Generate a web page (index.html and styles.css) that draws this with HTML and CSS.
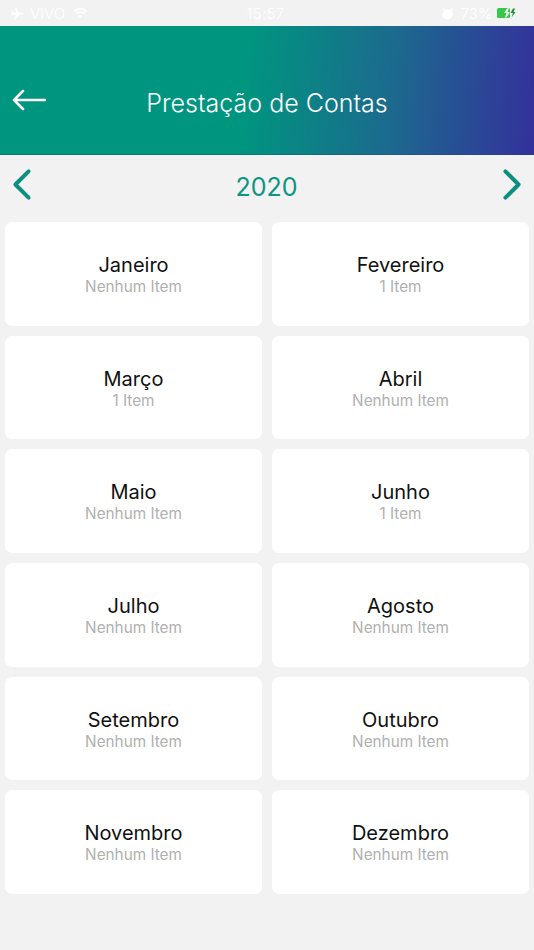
FILE: index.html
```html
<!DOCTYPE html>
<html lang="pt">
<head>
<meta charset="utf-8">
<title>Prestação de Contas</title>
<link rel="stylesheet" href="styles.css">
</head>
<body>
<div class="status">
  <div class="status-left">
    <svg class="st-plane" viewBox="0 0 16 14"><path d="M15 7c0-.7-.6-1-1.300-1H10L6.500 1H5l1.800 5H3.300L2 4.500H1L1.800 7 1 9.500h1L3.300 8h3.500L5 13h1.500L10 8h3.700C14.400 8 15 7.700 15 7z"/></svg>
    <span>VIVO</span>
    <svg class="st-wifi" viewBox="0 0 16 12"><path d="M8 11 5.800 8.600a3.200 3.200 0 0 1 4.400 0zM4.300 7 2.800 5.400a7.600 7.600 0 0 1 10.400 0L11.700 7a5.400 5.400 0 0 0-7.400 0zM1.700 4.300.5 3a11 11 0 0 1 15 0l-1.200 1.300a9.200 9.200 0 0 0-12.600 0z"/></svg>
  </div>
  <span class="status-time">15:57</span>
  <div class="status-right">
    <svg class="st-alarm" viewBox="0 0 14 14"><circle cx="7" cy="8" r="5.500"/><path d="M1 3l2.500-2 1 1L2 4zM13 3l-2.500-2-1 1L12 4z"/></svg>
    <span>73%</span>
    <svg class="st-batt" viewBox="0 0 22 12"><rect x="0" y="1" width="13" height="10" rx="1.500" fill="#35c84a"/><path d="M10 1.500 7 6h2.500L8 10.500 9 11l4-6h-2.500L12 1z" fill="#f2f2f2"/><path d="M16 1.500 13.500 6H16l-1.500 4.500L18.500 5H16.500L18 1.500z" fill="#1f8a3a"/></svg>
  </div>
</div>
<header class="topbar">
  <svg class="back" viewBox="0 0 34 22"><path d="M33 11H2M11 2 2 11l9 9"/></svg>
  <h1>Prestação de Contas</h1>
</header>
<nav class="year">
  <svg class="chev" viewBox="0 0 18 30"><path d="M15 3 3 15l12 12"/></svg>
  <span class="year-label">2020</span>
  <svg class="chev" viewBox="0 0 18 30"><path d="M3 3l12 12L3 27"/></svg>
</nav>
<main class="months">
  <div class="card"><div class="m">Janeiro</div><div class="n">Nenhum Item</div></div>
  <div class="card"><div class="m">Fevereiro</div><div class="n">1 Item</div></div>
  <div class="card"><div class="m">Março</div><div class="n">1 Item</div></div>
  <div class="card"><div class="m">Abril</div><div class="n">Nenhum Item</div></div>
  <div class="card"><div class="m">Maio</div><div class="n">Nenhum Item</div></div>
  <div class="card"><div class="m">Junho</div><div class="n">1 Item</div></div>
  <div class="card"><div class="m">Julho</div><div class="n">Nenhum Item</div></div>
  <div class="card"><div class="m">Agosto</div><div class="n">Nenhum Item</div></div>
  <div class="card"><div class="m">Setembro</div><div class="n">Nenhum Item</div></div>
  <div class="card"><div class="m">Outubro</div><div class="n">Nenhum Item</div></div>
  <div class="card"><div class="m">Novembro</div><div class="n">Nenhum Item</div></div>
  <div class="card"><div class="m">Dezembro</div><div class="n">Nenhum Item</div></div>
</main>
</body>
</html>
```

FILE: styles.css
```css
* { box-sizing: border-box; }
html, body { margin: 0; padding: 0; }
body {
  width: 534px;
  height: 950px;
  overflow: hidden;
  background: #f2f2f3;
  font-family: Inter, "Open Sans", sans-serif;
}
.status {
  height: 26px;
  padding: 0 15px 0 10px;
  display: grid;
  grid-template-columns: 1fr auto 1fr;
  align-items: center;
  color: #fff;
  font-size: 15px;
  font-weight: 300;
}
.status-left, .status-right { display: flex; align-items: center; gap: 5px; }
.status-right { justify-content: flex-end; gap: 7px; }
.status svg { fill: #fff; display: block; }
.st-plane { width: 15px; height: 13px; }
.st-wifi { width: 15px; height: 11px; margin-left: 3px; }
.st-alarm { width: 13px; height: 13px; }
.st-batt { width: 22px; height: 12px; margin-left: -2px; }
.status-time { font-size: 15px; letter-spacing: .3px; margin-left: 2px; }
.topbar {
  height: 129px;
  background: linear-gradient(94deg, #00957f 0%, #00957f 46%, #1c6a8e 73%, #34319b 100%);
  display: flex;
  align-items: center;
  justify-content: center;
  position: relative;
  padding-top: 25px;
  border-bottom: 1px solid rgba(30,70,110,.4);
}
.topbar h1 {
  margin: 0;
  color: #fff;
  font-size: 25px;
  font-weight: 300;
  letter-spacing: 0;
}
.back {
  position: absolute;
  left: 12px;
  top: 63px;
  width: 34px;
  height: 22px;
  fill: none;
  stroke: #fff;
  stroke-width: 2.600;
  stroke-linecap: round;
  stroke-linejoin: round;
}
.year {
  height: 67px;
  padding: 0 12px 8px;
  display: flex;
  align-items: center;
  justify-content: space-between;
}
.year-label {
  color: #0b9583;
  font-size: 25px;
  font-weight: 400;
  line-height: 34px;
  padding: 5px 1px 0 0;
}
.chev {
  width: 20px;
  height: 33px;
  fill: none;
  stroke: #0b8f7e;
  stroke-width: 3.600;
  stroke-linecap: round;
  stroke-linejoin: round;
}
.months {
  padding: 0 5px;
  display: grid;
  grid-template-columns: 1fr 1fr;
  grid-auto-rows: 103.700px;
  gap: 10px;
}
.card {
  background: #fff;
  border-radius: 7px;
  display: flex;
  flex-direction: column;
  align-items: center;
  justify-content: center;
  padding-top: 2px;
}
.m { font-size: 20px; line-height: 25px; color: #111; font-weight: 400; margin-top: -1px; }
.n { font-size: 15.300px; line-height: 18px; color: #b0b0b0; }
```
